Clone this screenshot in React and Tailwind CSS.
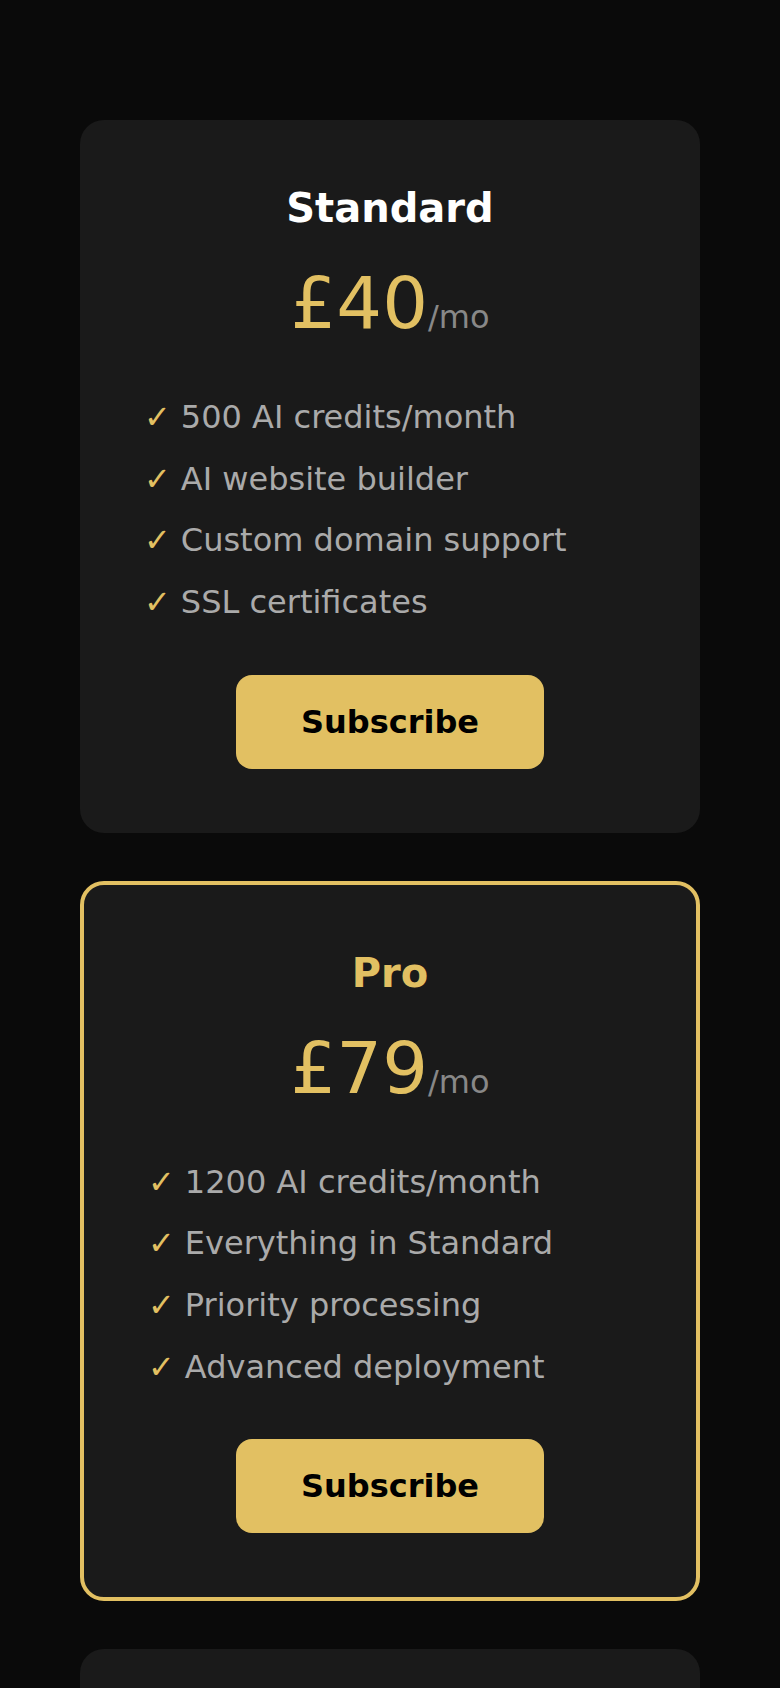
const plans = [
  {
    name: "Standard",
    price: "£40",
    features: [
      "500 AI credits/month",
      "AI website builder",
      "Custom domain support",
      "SSL certificates",
    ],
  },
  {
    name: "Pro",
    price: "£79",
    featured: true,
    features: [
      "1200 AI credits/month",
      "Everything in Standard",
      "Priority processing",
      "Advanced deployment",
    ],
  },
  {
    name: "Business",
    price: "£149",
    features: [
      "3000 AI credits/month",
      "Everything in Pro",
      "Team collaboration",
      "Dedicated support",
    ],
  },
];

function PlanCard({ plan }) {
  return (
    <div
      className={
        plan.featured
          ? "bg-[#1a1a1a] rounded-[24px] border-4 border-[#e2c062] p-[64px]"
          : "bg-[#1a1a1a] rounded-[24px] p-[64px]"
      }
    >
      <h3
        className={
          plan.featured
            ? "text-center text-[40px] leading-[48px] font-bold text-[#e2c062]"
            : "text-center text-[40px] leading-[48px] font-bold text-white"
        }
      >
        {plan.name}
      </h3>

      <div className="mt-[35px] flex items-baseline justify-center">
        <span className="text-[72px] leading-[72px] text-[#e2c062]">
          {plan.price}
        </span>
        <span className="text-[32px] leading-[72px] text-[#888888]">/mo</span>
      </div>

      <ul className="mt-[34px]">
        {plan.features.map((f) => (
          <li
            key={f}
            className="flex text-[32px] leading-[61.67px] text-[#aaaaaa]"
          >
            <span className="text-[#e2c062] mr-[10px]">✓</span>
            {f}
          </li>
        ))}
      </ul>

      <div className="mt-[41px] flex justify-center">
        <button className="w-[308px] h-[94px] rounded-2xl bg-[#e2c062] text-black text-[32px] font-bold flex items-center justify-center">
          Subscribe
        </button>
      </div>
    </div>
  );
}

export default function App() {
  return (
    <div
      className="min-h-screen bg-[#0a0a0a] px-[80px] pt-[120px] pb-[80px]"
      style={{ fontFamily: "'DejaVu Sans', sans-serif" }}
    >
      <div className="flex flex-col gap-[48px]">
        {plans.map((p) => (
          <PlanCard key={p.name} plan={p} />
        ))}
      </div>
    </div>
  );
}
